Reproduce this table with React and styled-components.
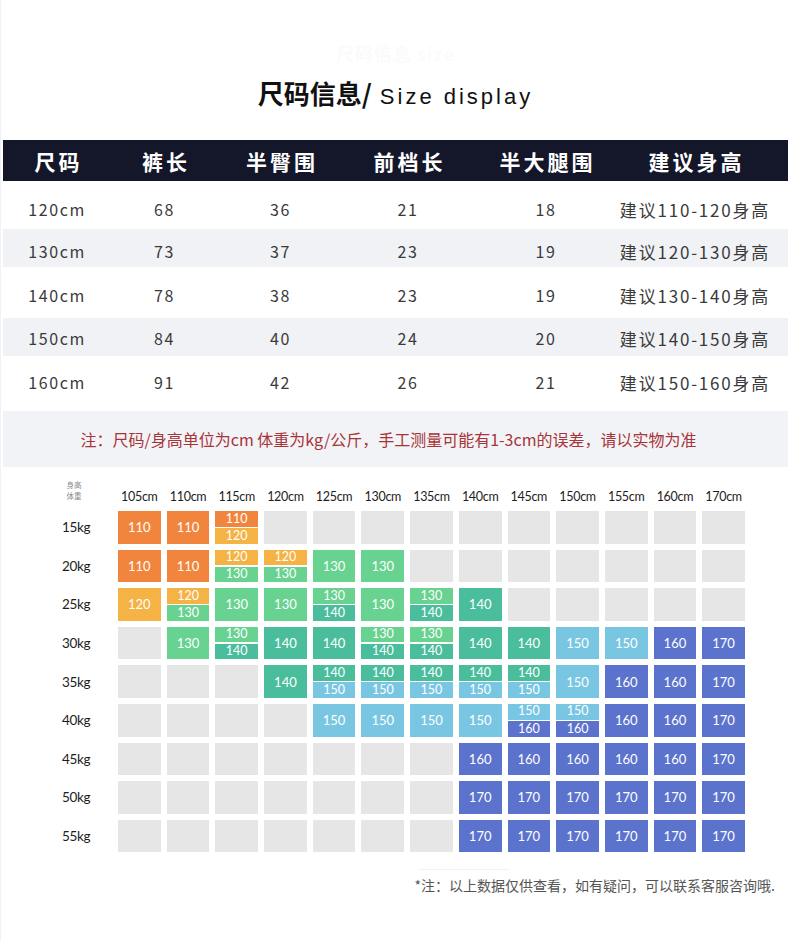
import React from "react";
import styled, { createGlobalStyle } from "styled-components";

const GlobalStyle = createGlobalStyle`
  html, body { margin: 0; padding: 0; background: #ffffff; }
  body { font-family: "Noto Sans CJK SC", "Noto Sans", sans-serif; color: #333; }
  * { box-sizing: border-box; }
`;

const Page = styled.div`
  width: 790px;
  min-height: 941px;
  padding: 40px 2px 0 2px;
  border-left: 1px solid #f1f1f6;
  display: flex;
  flex-direction: column;
`;

const Ghost = styled.div`
  text-align: center;
  font-size: 18px;
  line-height: 26px;
  font-weight: 700;
  color: #fbfbfb;
  letter-spacing: 1px;
`;

const Title = styled.h1`
  margin: 12px 0 28px;
  text-align: center;
  font-size: 26px;
  line-height: 30px;
  font-weight: 700;
  color: #111;
  letter-spacing: 0;
  white-space: nowrap;
  span {
    font-family: "Liberation Sans", "Noto Sans", sans-serif;
    font-weight: 400;
    font-size: 22px;
    letter-spacing: 3px;
    margin-left: 8px;
  }
`;

const tableCols = "108px 107px 125px 130px 146px 152px";

const HeadRow = styled.div`
  display: grid;
  grid-template-columns: ${tableCols};
  height: 41px;
  background: #141729;
  align-items: center;
`;

const HeadCell = styled.div`
  text-align: center;
  color: #ffffff;
  font-size: 21px;
  font-weight: 700;
  letter-spacing: 3px;
  padding-left: 3px;
  white-space: nowrap;
`;

const Row = styled.div`
  display: grid;
  grid-template-columns: ${tableCols};
  height: ${(p) => p.$h}px;
  padding-top: ${(p) => p.$pt}px;
  padding-bottom: ${(p) => p.$pb}px;
  background: ${(p) => (p.$alt ? "#f1f2f6" : "#ffffff")};
  align-items: center;
`;

const Cell = styled.div`
  text-align: center;
  font-size: ${(p) => (p.$wide ? 17 : 16)}px;
  color: #3a3a3a;
  letter-spacing: ${(p) => (p.$wide ? 1.8 : 1.6)}px;
  white-space: nowrap;
`;

const NoteBar = styled.div`
  height: 56px;
  background: #f2f3f6;
  display: flex;
  align-items: center;
  justify-content: center;
  color: #a8343a;
  font-size: 16px;
  letter-spacing: 0;
  white-space: nowrap;
  padding-right: 14px;
`;

const Chart = styled.div`
  display: grid;
  grid-template-columns: 54px repeat(13, 42.7px);
  grid-auto-rows: 32.6px;
  grid-template-rows: 20px;
  column-gap: 6px;
  row-gap: 6px;
  padding: 18px 0 0 55px;
`;

const Corner = styled.div`
  display: flex;
  flex-direction: column;
  align-items: center;
  width: 32px;
  margin-top: -6px;
  span {
    font-size: 7.5px;
    line-height: 11px;
    height: 11px;
    color: #8a8a8a;
    white-space: nowrap;
  }
`;

const ColHead = styled.div`
  font-family: "Lato", "Open Sans", sans-serif;
  font-size: 12.5px;
  color: #1d1d1d;
  text-align: center;
  white-space: nowrap;
  letter-spacing: -0.3px;
  align-self: end;
  margin-bottom: 1px;
`;

const RowHead = styled.div`
  font-family: "Lato", "Open Sans", sans-serif;
  font-size: 13.5px;
  color: #1d1d1d;
  display: flex;
  align-items: center;
  padding-left: 4px;
  letter-spacing: -0.3px;
`;

const palette = {
  o: "#f2853d",
  y: "#f5b245",
  g: "#68d290",
  t: "#4abd9c",
  l: "#79c6e3",
  b: "#5b73cc",
};

const Tile = styled.div`
  background: ${(p) => p.$bg};
  color: #ffffff;
  font-family: "Lato", "Open Sans", sans-serif;
  font-size: 13px;
  display: flex;
  align-items: center;
  justify-content: center;
`;

const Split = styled.div`
  display: flex;
  flex-direction: column;
  gap: 1.5px;
`;

const Half = styled.div`
  flex: 1;
  background: ${(p) => p.$bg};
  color: #ffffff;
  font-family: "Lato", "Open Sans", sans-serif;
  font-size: 12.5px;
  line-height: 1;
  display: flex;
  align-items: center;
  justify-content: center;
`;

const Footer = styled.div`
  display: flex;
  flex-direction: column;
  align-items: flex-end;
  padding: 17px 13px 0 0;
`;

const FootLine = styled.div`
  width: 90px;
  height: 1px;
  background: #f1f1f1;
  margin-right: 266px;
`;

const FootText = styled.div`
  margin-top: 5px;
  font-size: 14px;
  color: #555;
  white-space: nowrap;
`;

const heads = ["尺码", "裤长", "半臀围", "前档长", "半大腿围", "建议身高"];

const rows = [
  { d: ["120cm", "68", "36", "21", "18", "建议110-120身高"], h: 48, pt: 8, pb: 0 },
  { d: ["130cm", "73", "37", "23", "19", "建议120-130身高"], h: 38, pt: 6, pb: 0, alt: true },
  { d: ["140cm", "78", "38", "23", "19", "建议130-140身高"], h: 51, pt: 5, pb: 0 },
  { d: ["150cm", "84", "40", "24", "20", "建议140-150身高"], h: 38, pt: 2, pb: 0, alt: true },
  { d: ["160cm", "91", "42", "26", "21", "建议150-160身高"], h: 55, pt: 0, pb: 3 },
];

const cols = ["105cm", "110cm", "115cm", "120cm", "125cm", "130cm", "135cm", "140cm", "145cm", "150cm", "155cm", "160cm", "170cm"];

const E = "";
const chart = [
  ["15kg", ["o110", "o110", "o110/y120", E, E, E, E, E, E, E, E, E, E]],
  ["20kg", ["o110", "o110", "y120/g130", "y120/g130", "g130", "g130", E, E, E, E, E, E, E]],
  ["25kg", ["y120", "y120/g130", "g130", "g130", "g130/t140", "g130", "g130/t140", "t140", E, E, E, E, E]],
  ["30kg", [E, "g130", "g130/t140", "t140", "t140", "g130/t140", "g130/t140", "t140", "t140", "l150", "l150", "b160", "b170"]],
  ["35kg", [E, E, E, "t140", "t140/l150", "t140/l150", "t140/l150", "t140/l150", "t140/l150", "l150", "b160", "b160", "b170"]],
  ["40kg", [E, E, E, E, "l150", "l150", "l150", "l150", "l150/b160", "l150/b160", "b160", "b160", "b170"]],
  ["45kg", [E, E, E, E, E, E, E, "b160", "b160", "b160", "b160", "b160", "b170"]],
  ["50kg", [E, E, E, E, E, E, E, "b170", "b170", "b170", "b170", "b170", "b170"]],
  ["55kg", [E, E, E, E, E, E, E, "b170", "b170", "b170", "b170", "b170", "b170"]],
];

function ChartCell({ code }) {
  if (!code) return <Tile $bg="#e6e6e6" />;
  const parts = code.split("/");
  if (parts.length === 1) {
    return <Tile $bg={palette[code[0]]}>{code.slice(1)}</Tile>;
  }
  return (
    <Split>
      {parts.map((p, i) => (
        <Half key={i} $bg={palette[p[0]]}>{p.slice(1)}</Half>
      ))}
    </Split>
  );
}

export default function App() {
  return (
    <>
      <GlobalStyle />
      <Page>
        <Ghost>尺码信息 size</Ghost>
        <Title>
          尺码信息/<span>Size display</span>
        </Title>
        <HeadRow>
          {heads.map((h) => (
            <HeadCell key={h}>{h}</HeadCell>
          ))}
        </HeadRow>
        {rows.map((r, i) => (
          <Row key={i} $h={r.h} $pt={r.pt} $pb={r.pb} $alt={r.alt}>
            {r.d.map((c, j) => (
              <Cell key={j} $wide={j === 5}>{c}</Cell>
            ))}
          </Row>
        ))}
        <NoteBar>注：尺码/身高单位为cm 体重为kg/公斤，手工测量可能有1-3cm的误差，请以实物为准</NoteBar>
        <Chart>
          <Corner>
            <span>身高</span>
            <span>体重</span>
          </Corner>
          {cols.map((c) => (
            <ColHead key={c}>{c}</ColHead>
          ))}
          {chart.map(([kg, cells]) => (
            <React.Fragment key={kg}>
              <RowHead>{kg}</RowHead>
              {cells.map((code, i) => (
                <ChartCell key={i} code={code} />
              ))}
            </React.Fragment>
          ))}
        </Chart>
        <Footer>
          <FootLine />
          <FootText>*注：以上数据仅供查看，如有疑问，可以联系客服咨询哦.</FootText>
        </Footer>
      </Page>
    </>
  );
}
